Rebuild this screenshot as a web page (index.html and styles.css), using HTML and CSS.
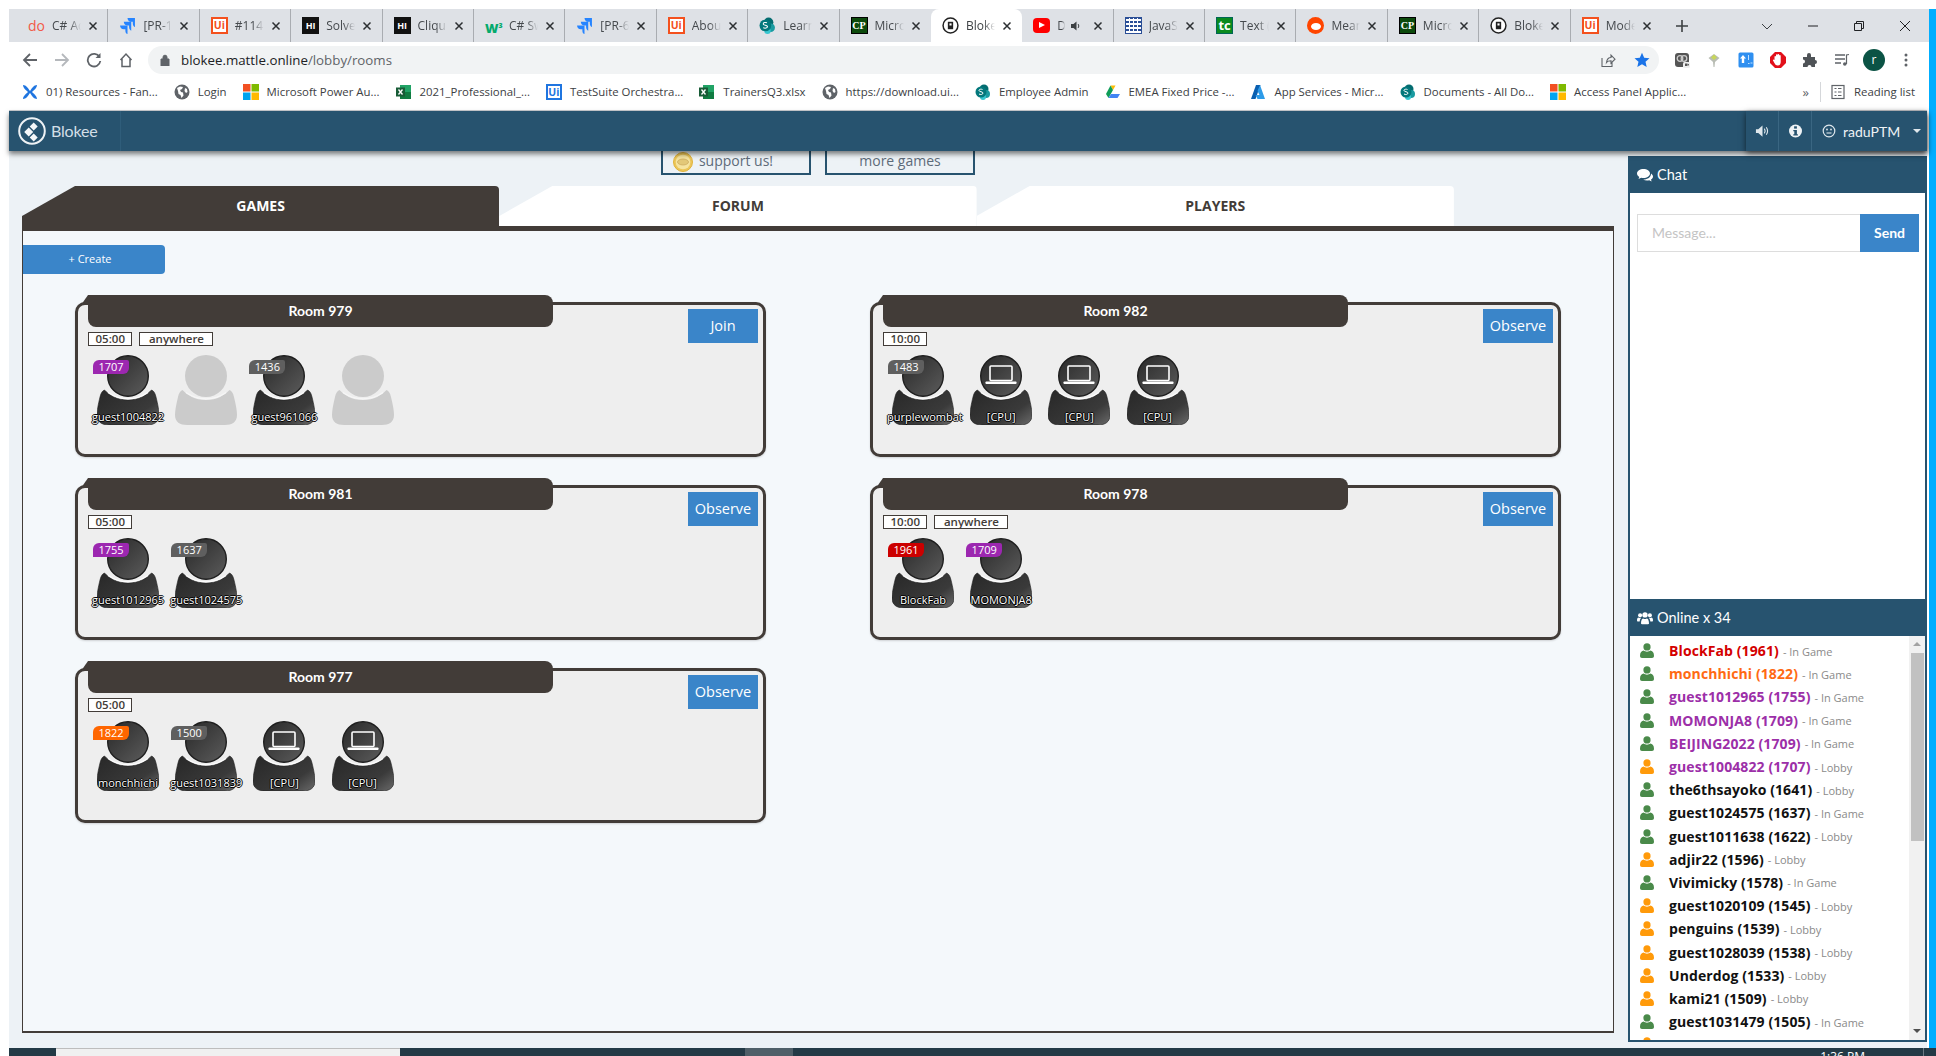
FILE: index.html
```html
<!DOCTYPE html>
<html lang="en">
<head>
<meta charset="utf-8">
<title>Blokee</title>
<link rel="stylesheet" href="styles.css">
</head>
<body>
<svg class="defs" width="0" height="0" aria-hidden="true">
  <defs>
    <linearGradient id="dark" x1="0" y1="0" x2="1" y2="1"><stop offset="0" stop-color="#282828"/><stop offset="1" stop-color="#5c5c5c"/></linearGradient>
    <linearGradient id="bodyg" x1="0" y1="0.2" x2="1" y2="1"><stop offset="0" stop-color="#2a2a2a"/><stop offset="0.65" stop-color="#3a3a3a"/><stop offset="1" stop-color="#6a6a6a"/></linearGradient>
    <symbol id="person" viewBox="0 0 62 70">
      <path fill="url(#bodyg)" stroke="#1d1d1d" stroke-width=".6" d="M7.500 35C12 40 20 45 31 45C42 45 50 40 54.500 35C57 36 58 38 59 42C61 50 62 56 62 60C62 67 57 70 50 70H12C5 70 0 67 0 60C0 56 1 50 3 42C4 38 5 36 7.500 35Z"/>
      <path fill="none" stroke="#fff" stroke-width="1.200" opacity=".85" d="M11 37.500C16 41 23 43.800 31 43.800C39 43.800 46 41 51 37.500"/>
      <circle cx="31" cy="21" r="20.300" fill="url(#dark)" stroke="#1e1e1e" stroke-width="1.400"/>
    </symbol>
    <symbol id="ghost" viewBox="0 0 62 70">
      <path fill="#cbcbcb" d="M7.500 35C12 40 20 45 31 45C42 45 50 40 54.500 35C57 36 58 38 59 42C61 50 62 56 62 60C62 67 57 70 50 70H12C5 70 0 67 0 60C0 56 1 50 3 42C4 38 5 36 7.500 35Z"/>
      <path fill="none" stroke="#f6f6f6" stroke-width="1.200" d="M11 37.500C16 41 23 43.800 31 43.800C39 43.800 46 41 51 37.500"/>
      <circle cx="31" cy="21" r="21" fill="#cbcbcb"/>
    </symbol>
    <symbol id="laptop" viewBox="0 0 62 70">
      <rect x="20" y="11" width="22" height="14.500" rx="1" fill="none" stroke="#fff" stroke-width="1.600"/>
      <rect x="15.500" y="26.500" width="31" height="2.600" rx=".8" fill="#fff"/>
    </symbol>
    <symbol id="user" viewBox="0 0 14 15">
      <circle cx="7" cy="3.900" r="3.600"/>
      <path d="M0 12.800C0 9.400 1.600 8 3.800 7.600C5 9 9 9 10.200 7.600C12.400 8 14 9.400 14 12.800C14 14.200 13.200 15 12 15H2C.8 15 0 14.200 0 12.800Z"/>
    </symbol>
    <symbol id="close" viewBox="0 0 10 10"><path d="M1.500 1.500L8.500 8.500M8.500 1.500L1.500 8.500" stroke="#2c2f32" stroke-width="1.500" fill="none"/></symbol>
    <symbol id="globe" viewBox="0 0 16 16"><circle cx="8" cy="8" r="7.500" fill="#5f6368"/><path fill="#fff" d="M3 4l3-1.500 3 .5-1 2-2 1 1 2 2 .5.500 3-2 2.500-1-3-2-1-.5-3zM11 4l2 1 .5 3-1.500 1-1.500-2z"/></symbol>
    <symbol id="coinglobe" viewBox="0 0 16 16"><circle cx="8" cy="8" r="7" fill="#fff" stroke="#222" stroke-width="1.400"/><path d="M5.500 4.500h5v7h-5z" fill="#222"/><path d="M7 6h2v2H7z" fill="#fff"/></symbol>
    <symbol id="jira" viewBox="0 0 16 16"><path fill="#2684ff" d="M15 1H8c0 2 1.500 3.500 3.500 3.500H13V6c0 2 1.200 3.200 2 3.500zM11.500 4.500h-7c0 2 1.500 3.500 3.500 3.500h1.500v1.500c0 2 1.200 3.200 2 3.500z"/><path fill="#2684ff" d="M8 8H1c0 2 1.500 3.500 3.500 3.500H6V13c0 2 1.200 3 2 3z"/></symbol>
    <symbol id="excel" viewBox="0 0 16 16"><path fill="#21a366" d="M4 1h11v14H4z"/><path fill="#107c41" d="M9 8h6v7H4v-4z"/><rect y="3.500" width="9" height="9" fill="#185c37"/><path d="M2.500 5.500l4 5M6.500 5.500l-4 5" stroke="#fff" stroke-width="1.300"/></symbol>
    <symbol id="ms" viewBox="0 0 16 16"><path fill="#f25022" d="M0 0h7.500v7.500H0z"/><path fill="#7fba00" d="M8.500 0H16v7.500H8.500z"/><path fill="#00a4ef" d="M0 8.500h7.500V16H0z"/><path fill="#ffb900" d="M8.500 8.500H16V16H8.500z"/></symbol>
    <symbol id="sp" viewBox="0 0 16 16"><circle cx="9" cy="5" r="4.500" fill="#036c70"/><circle cx="11" cy="10" r="4" fill="#1a9ba1"/><circle cx="8" cy="13" r="3" fill="#37c6d0"/><circle cx="6" cy="8" r="5.500" fill="#03787c"/><path d="M4 10c1.500 1 4 .5 4-1s-4-1-4-2.500 2.500-1.500 3.500-1" stroke="#fff" fill="none" stroke-width="1"/></symbol>
  </defs>
</svg>

<div class="window">
  <div class="tabstrip">
    <div class="tab"><span class="fav fav-do">do</span><span class="tab-title">C# Ad</span><svg class="x"><use href="#close"/></svg></div>
    <div class="tab"><svg class="fav"><use href="#jira"/></svg><span class="tab-title">[PR-1</span><svg class="x"><use href="#close"/></svg></div>
    <div class="tab"><span class="fav fav-ui">Ui</span><span class="tab-title">#114</span><svg class="x"><use href="#close"/></svg></div>
    <div class="tab"><span class="fav fav-hi">HI</span><span class="tab-title">Solve</span><svg class="x"><use href="#close"/></svg></div>
    <div class="tab"><span class="fav fav-hi">HI</span><span class="tab-title">Cliqu</span><svg class="x"><use href="#close"/></svg></div>
    <div class="tab"><span class="fav fav-w3">W<sup>3</sup></span><span class="tab-title">C# Sw</span><svg class="x"><use href="#close"/></svg></div>
    <div class="tab"><svg class="fav"><use href="#jira"/></svg><span class="tab-title">[PR-6</span><svg class="x"><use href="#close"/></svg></div>
    <div class="tab"><span class="fav fav-ui">Ui</span><span class="tab-title">Abou</span><svg class="x"><use href="#close"/></svg></div>
    <div class="tab"><svg class="fav"><use href="#sp"/></svg><span class="tab-title">Learn</span><svg class="x"><use href="#close"/></svg></div>
    <div class="tab tab-prev"><span class="fav fav-cp">CP</span><span class="tab-title">Micro</span><svg class="x"><use href="#close"/></svg></div>
    <div class="tab tab-active"><svg class="fav"><use href="#coinglobe"/></svg><span class="tab-title">Bloke</span><svg class="x"><use href="#close"/></svg></div>
    <div class="tab"><span class="fav fav-yt"></span><span class="tab-title tab-short">D</span><svg class="speaker" viewBox="0 0 12 12"><path d="M1 4h2.500L6.500 1.500v9L3.500 8H1z" fill="#3c4043"/><path d="M8 4c1 1 1 3 0 4" stroke="#3c4043" fill="none"/></svg><svg class="x"><use href="#close"/></svg></div>
    <div class="tab"><span class="fav fav-grid"></span><span class="tab-title">JavaS</span><svg class="x"><use href="#close"/></svg></div>
    <div class="tab"><span class="fav fav-tc">tc</span><span class="tab-title">Text (</span><svg class="x"><use href="#close"/></svg></div>
    <div class="tab"><span class="fav fav-red"></span><span class="tab-title">Mean</span><svg class="x"><use href="#close"/></svg></div>
    <div class="tab"><span class="fav fav-cp">CP</span><span class="tab-title">Micro</span><svg class="x"><use href="#close"/></svg></div>
    <div class="tab"><svg class="fav"><use href="#coinglobe"/></svg><span class="tab-title">Bloke</span><svg class="x"><use href="#close"/></svg></div>
    <div class="tab"><span class="fav fav-ui">Ui</span><span class="tab-title">Mode</span><svg class="x"><use href="#close"/></svg></div>
    <svg class="newtab" viewBox="0 0 14 14"><path d="M7 1v12M1 7h12" stroke="#3c4043" stroke-width="1.600"/></svg>
    <div class="winctl">
      <svg viewBox="0 0 12 12"><path d="M1 4l5 5 5-5" stroke="#3c4043" fill="none"/></svg>
      <svg viewBox="0 0 12 12"><path d="M1 6h10" stroke="#202124"/></svg>
      <svg viewBox="0 0 12 12"><path d="M3.500 3.500V1.500h7v7h-2M1.500 3.500h7v7h-7z" stroke="#202124" fill="none"/></svg>
      <svg viewBox="0 0 12 12"><path d="M1 1l10 10M11 1L1 11" stroke="#202124" fill="none"/></svg>
    </div>
  </div>

  <div class="toolbar">
    <svg class="nav" viewBox="0 0 16 16"><path d="M15 8H2M8 2L2 8l6 6" fill="none" stroke="#5f6368" stroke-width="1.800"/></svg>
    <svg class="nav" viewBox="0 0 16 16"><path d="M1 8h13M8 2l6 6-6 6" fill="none" stroke="#b5b8bc" stroke-width="1.800"/></svg>
    <svg class="nav" viewBox="0 0 16 16"><path d="M13.500 5A6.300 6.300 0 1 0 14.300 9" fill="none" stroke="#5f6368" stroke-width="1.800"/><path d="M14.500 1v5h-5z" fill="#5f6368"/></svg>
    <svg class="nav" viewBox="0 0 16 16"><path d="M2.500 8L8 2l5.500 6M4 7v7.500h8V7" fill="none" stroke="#5f6368" stroke-width="1.500"/></svg>
    <div class="urlbar">
      <svg class="lock" viewBox="0 0 10 12"><path d="M1 5h8v7H1zM3 5V3.200a2 2 0 0 1 4 0V5" fill="#5f6368" stroke="#5f6368"/></svg>
      <span class="url">blokee.mattle.online<span class="url-path">/lobby/rooms</span></span>
      <svg class="share" viewBox="0 0 16 16"><path d="M2 6v8.500h10V10M6.500 10.500C7 7 9 5.500 11 5.500V3l4 4.200-4 4V8.800c-2 0-3.500.4-4.500 1.700z" fill="none" stroke="#5f6368" stroke-width="1.100"/></svg>
      <svg class="star" viewBox="0 0 16 16"><path d="M8 .8l2.200 5 5.300.5-4 3.500 1.200 5.300L8 12.300l-4.700 2.800 1.200-5.300-4-3.500 5.300-.5z" fill="#1a73e8"/></svg>
    </div>
    <div class="exts">
      <svg viewBox="0 0 16 16"><rect x="1" y="1" width="14" height="14" rx="3" fill="#555"/><circle cx="6" cy="6.500" r="2.800" fill="none" stroke="#ccc" stroke-width="1.300"/><circle cx="10" cy="6.500" r="2.800" fill="none" stroke="#ccc" stroke-width="1.300"/><rect x="9" y="10" width="7" height="6" rx="1.500" fill="#eee"/><path d="M11 11.500h2.500v2.500H11zM13.500 12.700l1.500-1v2z" fill="#555"/></svg>
      <svg viewBox="0 0 16 16"><path d="M2.500 6L8 2l5.500 4L9 10l-.5 5h-1L7 10z" fill="#b9bdb4"/><path d="M5 5.500L8 2.500l3 3L8 8z" fill="#c7d65a"/></svg>
      <svg viewBox="0 0 16 16"><rect x="0.500" y="0.500" width="15" height="15" rx="1.500" fill="#2f8ff0"/><path d="M5 3l3 3.500H6.200V11H3.800V6.500H2z" fill="#fff"/><path d="M10.500 3v5M12.500 11h2M10 11.500h1.500" stroke="#bfe0ff"/></svg>
      <svg viewBox="0 0 16 16"><path d="M5 0h6l5 5v6l-5 5H5l-5-5V5z" fill="#e2101a"/><path d="M4.500 8V4.500a.8.8 0 0 1 1.500 0V3a.8.8 0 0 1 1.600 0v-.2a.8.8 0 0 1 1.600 0V3.500a.8.8 0 0 1 1.500 0V10c0 2-1 3.500-3 3.500-1.500 0-2.500-.7-3-2L3 8.500c-.4-1 .9-1.600 1.500-.5z" fill="#fff"/></svg>
      <svg viewBox="0 0 16 16"><path d="M1 5h4V3a2 2 0 0 1 4 0v2h4v3a2 2 0 0 1 0 4v3H9.500a2 2 0 0 0-4 0H1v-3.500a2 2 0 0 0 0-4z" fill="#4f5357"/></svg>
      <svg viewBox="0 0 16 16"><path d="M1 3h10M1 7h10M1 11h6" stroke="#5f6368" stroke-width="1.500"/><path d="M12.500 12V3l2.500-.5" stroke="#5f6368" fill="none" stroke-width="1.200"/><circle cx="10.800" cy="12" r="1.800" fill="#5f6368"/></svg>
      <span class="profile">r</span>
      <svg viewBox="0 0 16 16"><circle cx="8" cy="3" r="1.500" fill="#5f6368"/><circle cx="8" cy="8" r="1.500" fill="#5f6368"/><circle cx="8" cy="13" r="1.500" fill="#5f6368"/></svg>
    </div>
  </div>

  <div class="bookmarks">
    <a class="bm"><svg viewBox="0 0 16 16"><path d="M1 1c3 0 5 3 7 6 2-3 4-6 7-6 0 3-3 5-5 7 2 2 5 4 5 7-3 0-5-3-7-6-2 3-4 6-7 6 0-3 3-5 5-7-2-2-5-4-5-7z" fill="#1f75e0"/></svg>01) Resources - Fan...</a>
    <a class="bm"><svg><use href="#globe"/></svg>Login</a>
    <a class="bm"><svg><use href="#ms"/></svg>Microsoft Power Au...</a>
    <a class="bm"><svg><use href="#excel"/></svg>2021_Professional_...</a>
    <a class="bm"><span class="fav fav-uib">Ui</span>TestSuite Orchestra...</a>
    <a class="bm"><svg><use href="#excel"/></svg>TrainersQ3.xlsx</a>
    <a class="bm"><svg><use href="#globe"/></svg>https://download.ui...</a>
    <a class="bm"><svg><use href="#sp"/></svg>Employee Admin</a>
    <a class="bm"><svg viewBox="0 0 16 16"><path d="M5.500 1.500h5L8 6z" fill="#fbbc04"/><path d="M5.500 1.500L1 10l2.500 4L8 6z" fill="#0f9d58"/><path d="M10.500 1.500L15 10l-2.500 4H3.500L6 10h9z" fill="#4285f4"/></svg>EMEA Fixed Price -...</a>
    <a class="bm"><svg viewBox="0 0 16 16"><path d="M6 1h4.500l-5 14H1z" fill="#0a5fb0"/><path d="M10 1l5 14H7.500L5.500 11h4L7.500 7z" fill="#2d9be8"/></svg>App Services - Micr...</a>
    <a class="bm"><svg><use href="#sp"/></svg>Documents - All Do...</a>
    <a class="bm"><svg><use href="#ms"/></svg>Access Panel Applic...</a>
    <span class="bm-more">»</span>
    <a class="bm bm-read"><svg viewBox="0 0 16 16"><rect x="2" y="1.500" width="12" height="13" fill="none" stroke="#5f6368" stroke-width="1.200"/><path d="M4.500 4.500h2M8 4.500h3.500M4.500 8h2M8 8h3.500M4.500 11.500h2M8 11.500h3.500" stroke="#5f6368"/></svg>Reading list</a>
  </div>

  <header class="appbar">
    <div class="logo">
      <svg viewBox="0 0 28 28"><circle cx="14" cy="14" r="12.800" fill="none" stroke="#eef2f5" stroke-width="2"/><path d="M15.700 5.500l4 4-4 4-4-4zM10.700 10.500l4.500 4.500-4.500 4.500L6.200 15zM15.700 16.500l4 4-4 4-4-4z" fill="#f4f7f9"/></svg>
      <span>Blokee</span>
    </div>
    <div class="appbar-right">
      <span class="ab-cell"><svg viewBox="0 0 16 14"><path d="M1 5h2.500L8 1v12L3.500 9H1z" fill="#dfe7ec"/><path d="M10 4.500c1 1.500 1 3.500 0 5M12 3c1.800 2.500 1.800 5.500 0 8" stroke="#dfe7ec" fill="none" stroke-width="1.200"/></svg></span>
      <span class="ab-cell"><svg viewBox="0 0 14 14"><circle cx="7" cy="7" r="6.500" fill="#eef2f5"/><rect x="5.600" y="2.300" width="2.800" height="2.300" fill="#27536f"/><path d="M4.800 6h3.600v4.200h1v1.300H4.800v-1.300h1V7.300h-1z" fill="#27536f"/></svg></span>
      <span class="ab-user">
        <svg viewBox="0 0 14 14"><circle cx="7" cy="7" r="5.800" fill="none" stroke="#dfe7ec" stroke-width="1.200"/><circle cx="5" cy="5.500" r=".9" fill="#dfe7ec"/><circle cx="9" cy="5.500" r=".9" fill="#dfe7ec"/><path d="M4.500 9h5" stroke="#dfe7ec" stroke-width="1.100"/></svg>
        <span>raduPTM</span>
        <i class="caret"></i>
      </span>
    </div>
  </header>

  <div class="app">
    <main class="content">
      <div class="promo">
        <a class="promo-btn promo-coin"><svg viewBox="0 0 20 20"><circle cx="10" cy="10" r="9.500" fill="#ecc65a" stroke="#e0b33a"/><circle cx="10" cy="10" r="7.300" fill="#f6e4a0"/><ellipse cx="10" cy="10" rx="5.500" ry="3" fill="#e3c878" stroke="#c9a65a" stroke-width=".7"/></svg>support us!</a>
        <a class="promo-btn">more games</a>
      </div>
      <nav class="tabs">
        <a class="ptab ptab-on">GAMES</a>
        <a class="ptab">FORUM</a>
        <a class="ptab">PLAYERS</a>
      </nav>
      <section class="panel">
        <a class="create">+ Create</a>
        <div class="rooms">

          <article class="room">
            <div class="room-head"><h3 class="room-title">Room 979</h3><a class="room-btn">Join</a></div>
            <div class="tags"><span class="tag">05:00</span><span class="tag tag-w">anywhere</span></div>
            <div class="seats">
              <div class="seat"><svg class="av"><use href="#person"/></svg><b class="badge b-purple">1707</b><span class="name">guest1004822</span></div>
              <div class="seat"><svg class="av"><use href="#ghost"/></svg></div>
              <div class="seat"><svg class="av"><use href="#person"/></svg><b class="badge b-gray">1436</b><span class="name">guest961066</span></div>
              <div class="seat"><svg class="av"><use href="#ghost"/></svg></div>
            </div>
          </article>

          <article class="room">
            <div class="room-head"><h3 class="room-title">Room 982</h3><a class="room-btn">Observe</a></div>
            <div class="tags"><span class="tag">10:00</span></div>
            <div class="seats">
              <div class="seat"><svg class="av"><use href="#person"/></svg><b class="badge b-gray">1483</b><span class="name">purplewombat</span></div>
              <div class="seat"><svg class="av"><use href="#person"/><use href="#laptop"/></svg><span class="name">[CPU]</span></div>
              <div class="seat"><svg class="av"><use href="#person"/><use href="#laptop"/></svg><span class="name">[CPU]</span></div>
              <div class="seat"><svg class="av"><use href="#person"/><use href="#laptop"/></svg><span class="name">[CPU]</span></div>
            </div>
          </article>

          <article class="room">
            <div class="room-head"><h3 class="room-title">Room 981</h3><a class="room-btn">Observe</a></div>
            <div class="tags"><span class="tag">05:00</span></div>
            <div class="seats">
              <div class="seat"><svg class="av"><use href="#person"/></svg><b class="badge b-purple">1755</b><span class="name">guest1012965</span></div>
              <div class="seat"><svg class="av"><use href="#person"/></svg><b class="badge b-gray">1637</b><span class="name">guest1024575</span></div>
            </div>
          </article>

          <article class="room">
            <div class="room-head"><h3 class="room-title">Room 978</h3><a class="room-btn">Observe</a></div>
            <div class="tags"><span class="tag">10:00</span><span class="tag tag-w">anywhere</span></div>
            <div class="seats">
              <div class="seat"><svg class="av"><use href="#person"/></svg><b class="badge b-red">1961</b><span class="name">BlockFab</span></div>
              <div class="seat"><svg class="av"><use href="#person"/></svg><b class="badge b-purple">1709</b><span class="name">MOMONJA8</span></div>
            </div>
          </article>

          <article class="room">
            <div class="room-head"><h3 class="room-title">Room 977</h3><a class="room-btn">Observe</a></div>
            <div class="tags"><span class="tag">05:00</span></div>
            <div class="seats">
              <div class="seat"><svg class="av"><use href="#person"/></svg><b class="badge b-orange">1822</b><span class="name">monchhichi</span></div>
              <div class="seat"><svg class="av"><use href="#person"/></svg><b class="badge b-gray">1500</b><span class="name">guest1031839</span></div>
              <div class="seat"><svg class="av"><use href="#person"/><use href="#laptop"/></svg><span class="name">[CPU]</span></div>
              <div class="seat"><svg class="av"><use href="#person"/><use href="#laptop"/></svg><span class="name">[CPU]</span></div>
            </div>
          </article>

        </div>
      </section>
    </main>

    <aside class="side">
      <div class="side-head"><svg viewBox="0 0 16 14"><path d="M6.500 1C3 1 0 3 0 5.500c0 1.500 1 2.700 2.300 3.500L1.500 11l2.700-1.300c.7.200 1.500.3 2.300.3 3.500 0 6.500-2 6.500-4.500S10 1 6.500 1z" fill="#fff"/><path d="M14 5.500c1.300.8 2 1.900 2 3.100 0 1.200-.8 2.300-2 3l.6 1.900-2.400-1.300c-.8.200-1.400.3-2.200.3-1.500 0-2.800-.4-3.800-1 4 .2 8-2 7.800-6z" fill="#fff"/></svg>Chat</div>
      <div class="chat">
        <div class="chat-form"><span class="chat-input">Message...</span><a class="chat-send">Send</a></div>
      </div>
      <div class="side-head"><svg viewBox="0 0 18 14"><circle cx="9" cy="3.500" r="3" fill="#fff"/><path d="M4.500 13c0-4 1.500-5.500 2.500-5.500 1 1 3 1 4 0 1 0 2.500 1.500 2.500 5.500 0 .7-.5 1-1 1h-7c-.5 0-1-.3-1-1z" fill="#fff"/><circle cx="3.500" cy="4" r="2.300" fill="#fff"/><circle cx="14.500" cy="4" r="2.300" fill="#fff"/><path d="M0 9.500c0-2 .8-3 1.700-3 .8.700 2 .8 2.800.4-.9 1-1.400 2.300-1.500 4H1c-.6 0-1-.5-1-1.400zM18 9.500c0-2-.8-3-1.700-3-.8.700-2 .8-2.800.4.900 1 1.400 2.300 1.500 4H17c.6 0 1-.5 1-1.400z" fill="#fff"/></svg>Online x 34</div>
      <div class="online">
        <ul class="players">
          <li class="pl"><svg class="pi pi-g"><use href="#user"/></svg><b class="c-red">BlockFab (1961)</b><span>- In Game</span></li>
          <li class="pl"><svg class="pi pi-g"><use href="#user"/></svg><b class="c-orange">monchhichi (1822)</b><span>- In Game</span></li>
          <li class="pl"><svg class="pi pi-g"><use href="#user"/></svg><b class="c-purple">guest1012965 (1755)</b><span>- In Game</span></li>
          <li class="pl"><svg class="pi pi-g"><use href="#user"/></svg><b class="c-purple">MOMONJA8 (1709)</b><span>- In Game</span></li>
          <li class="pl"><svg class="pi pi-g"><use href="#user"/></svg><b class="c-purple">BEIJING2022 (1709)</b><span>- In Game</span></li>
          <li class="pl"><svg class="pi pi-o"><use href="#user"/></svg><b class="c-purple">guest1004822 (1707)</b><span>- Lobby</span></li>
          <li class="pl"><svg class="pi pi-g"><use href="#user"/></svg><b>the6thsayoko (1641)</b><span>- Lobby</span></li>
          <li class="pl"><svg class="pi pi-g"><use href="#user"/></svg><b>guest1024575 (1637)</b><span>- In Game</span></li>
          <li class="pl"><svg class="pi pi-g"><use href="#user"/></svg><b>guest1011638 (1622)</b><span>- Lobby</span></li>
          <li class="pl"><svg class="pi pi-o"><use href="#user"/></svg><b>adjir22 (1596)</b><span>- Lobby</span></li>
          <li class="pl"><svg class="pi pi-g"><use href="#user"/></svg><b>Vivimicky (1578)</b><span>- In Game</span></li>
          <li class="pl"><svg class="pi pi-o"><use href="#user"/></svg><b>guest1020109 (1545)</b><span>- Lobby</span></li>
          <li class="pl"><svg class="pi pi-o"><use href="#user"/></svg><b>penguins (1539)</b><span>- Lobby</span></li>
          <li class="pl"><svg class="pi pi-o"><use href="#user"/></svg><b>guest1028039 (1538)</b><span>- Lobby</span></li>
          <li class="pl"><svg class="pi pi-o"><use href="#user"/></svg><b>Underdog (1533)</b><span>- Lobby</span></li>
          <li class="pl"><svg class="pi pi-o"><use href="#user"/></svg><b>kami21 (1509)</b><span>- Lobby</span></li>
          <li class="pl"><svg class="pi pi-g"><use href="#user"/></svg><b>guest1031479 (1505)</b><span>- In Game</span></li>
          <li class="pl"><svg class="pi pi-o"><use href="#user"/></svg></li>
        </ul>
        <div class="sbar">
          <i class="arr arr-up"></i>
          <i class="thumb"></i>
          <i class="arr arr-down"></i>
        </div>
      </div>
    </aside>
  </div>
</div>

<footer class="taskbar">
  <span class="tb-start"></span>
  <span class="tb-search"></span>
  <span class="tb-gap"></span>
  <span class="tb-active"></span>
  <span class="tb-fill"></span>
  <span class="tb-clock">1:36 PM</span>
  <span class="tb-sep"></span>
</footer>
</body>
</html>
```
FILE: styles.css
```css
* { box-sizing: border-box; }
html, body { margin: 0; height: 1056px; overflow: hidden; }
body { display: flex; flex-direction: column; padding-top: 9px; background: #fff; font-family: "Open Sans", "Liberation Sans", sans-serif; color: #202124; }
.defs { position: absolute; }
a { color: inherit; text-decoration: none; }
h3 { margin: 0; }
ul { margin: 0; padding: 0; list-style: none; }

.window { height: 1039px; margin-left: 9px; padding-right: 2px; border-right: 7px solid #00aeff; display: flex; flex-direction: column; }

/* browser tabs */
.tabstrip { height: 33px; flex: none; background: #dee1e6; display: flex; align-items: center; padding-left: 8px; margin-right: -2px; }
.tab { width: 91.4px; height: 33px; flex: none; display: flex; align-items: center; padding-left: 11px; position: relative; border-right: 1px solid #a9acb1; }
.tab-prev, .tab:nth-child(18) { border-right-color: transparent; }
.tab:nth-child(10) { border-right: 0; }
.tab-active { background: #fff; border-radius: 8px 8px 0 0; border-right: 0; }
.fav { width: 17px; height: 17px; flex: none; display: block; text-align: center; font-size: 10px; line-height: 17px; font-weight: 700; }
.fav-do { color: #f25a47; font-size: 14px; font-weight: 400; }
.fav-ui { background: #fff; color: #f4511e; border: 2px solid #f4511e; line-height: 13px; font-weight: 700; font-size: 10.5px; }
.fav-uib { background: #fff; color: #1f75e0; border: 2px solid #1f75e0; line-height: 12px; font-weight: 700; font-size: 10.5px; margin-right: 8px; width: 16px; height: 16px; }
.fav-hi { background: #111; color: #fff; font-size: 9px; }
.fav-w3 { color: #04aa6d; font-size: 13px; font-weight: 800; }
.fav-w3 sup { font-size: 7px; }
.fav-cp { background: #0c4a0c; color: #fff; border: 1px solid #000; font-size: 10px; font-family: "Liberation Serif", serif; line-height: 15px; }
.fav-yt { background: #f00; border-radius: 4px; position: relative; height: 15px; }
.fav-yt::after { content: ""; position: absolute; left: 6px; top: 4px; border-left: 6px solid #fff; border-top: 3.5px solid transparent; border-bottom: 3.5px solid transparent; }
.fav-grid { background: repeating-linear-gradient(0deg, #fff 0 2px, transparent 2px 4px), repeating-linear-gradient(90deg, #2a4e96 0 3px, #fff 3px 4px); border: 1.5px solid #2a4e96; }
.fav-tc { background: #0a8a1e; color: #fff; font-size: 13px; border: 1px solid #065; line-height: 15px; }
.fav-red { background: #ff4500; border-radius: 50%; position: relative; }
.fav-red::after { content: ""; position: absolute; left: 3.5px; top: 6px; width: 10px; height: 7px; border-radius: 50%; background: #fff; }
.tab-title { margin-left: 7px; width: 29px; flex: none; overflow: hidden; white-space: nowrap; font-size: 12px; color: #45494d; -webkit-mask-image: linear-gradient(90deg, #000 60%, transparent); mask-image: linear-gradient(90deg, #000 60%, transparent); }
.tab-short { width: 8px; }
.speaker { width: 12px; height: 12px; margin-left: 5px; margin-right: 4px; flex: none; }
.x { width: 10px; height: 10px; flex: none; margin-left: 7px; }
.tab-active .tab-title { color: #3c4043; }
.newtab { width: 14px; height: 14px; flex: none; margin-left: 13px; }
.winctl { margin-left: auto; display: flex; align-items: center; gap: 34px; padding-right: 18px; }
.winctl svg { width: 12px; height: 12px; display: block; }

/* toolbar */
.toolbar { height: 35px; flex: none; display: flex; align-items: center; padding-left: 13px; background: #fff; }
.nav { width: 16px; height: 16px; margin-right: 16px; flex: none; }
.urlbar { height: 28px; width: 1511px; margin-left: -2px; flex: none; background: #f1f3f4; border-radius: 14px; display: flex; align-items: center; padding-left: 12px; }
.lock { width: 10px; height: 12px; flex: none; }
.url { margin-left: 11px; font-size: 13.3px; color: #202124; }
.url-path { color: #5f6368; }
.share { width: 16px; height: 16px; margin-left: auto; }
.star { width: 16px; height: 16px; margin-left: 18px; margin-right: 9px; }
.exts { display: flex; align-items: center; gap: 16px; margin-left: 15px; }
.exts svg { width: 16px; height: 16px; display: block; }
.profile { width: 22px; height: 22px; margin: 0 -3px; border-radius: 50%; background: #0b5345; color: #fff; font-size: 12px; text-align: center; line-height: 22px; flex: none; }

/* bookmarks */
.bookmarks { height: 34px; flex: none; display: flex; align-items: center; padding: 0 0 4px 13px; border-bottom: 1px solid #c9cbcf; gap: 16px; background: #fff; font-size: 11.4px; color: #3c4043; white-space: nowrap; }
.bm { display: flex; align-items: center; }
.bm svg { width: 16px; height: 16px; margin-right: 8px; flex: none; }
.bm-more { margin-left: auto; margin-right: -7px; color: #5f6368; font-size: 13px; padding-right: 11px; border-right: 1px solid #d5d7da; line-height: 20px; }
.bm-read { padding-right: 12px; }

/* app bar */
.appbar { height: 40px; flex: none; background: #27536f; display: flex; justify-content: space-between; box-shadow: 0 3px 5px rgba(0,0,0,.5); position: relative; z-index: 2; }
.logo { width: 112px; display: flex; align-items: center; padding: 0 0 2px 9px; border-right: 1px solid #2f5d7a; color: #d3dfe7; font-family: Lato, sans-serif; font-size: 16px; font-weight: 400; letter-spacing: -.2px; }
.logo svg { width: 28px; height: 28px; margin-right: 5px; margin-top: 2px; }
.appbar-right { display: flex; align-items: stretch; box-shadow: 0 2px 6px rgba(0,0,0,.6); color: #eef2f5; font-family: Lato, sans-serif; font-size: 14px; }
.ab-cell { width: 33px; display: flex; align-items: center; justify-content: center; border-right: 1px solid #3a6682; }
.ab-cell svg { width: 15px; height: 14px; }
.ab-user { width: 115px; display: flex; align-items: center; padding-left: 10px; gap: 7px; }
.ab-user svg { width: 14px; height: 14px; }
.caret { margin-left: 6px; border-top: 4px solid #dfe7ec; border-left: 4px solid transparent; border-right: 4px solid transparent; }

/* main */
.app { flex: 1; min-height: 0; display: flex; background: #edf2f6; }
.content { flex: 1; min-width: 0; padding: 0 14px 15px 13px; display: flex; flex-direction: column; }
.promo { display: flex; justify-content: center; gap: 14px; height: 24px; flex: none; }
.promo-btn { width: 150px; height: 24px; padding-bottom: 3px; border: 2px solid #27536f; border-top: 0; display: flex; align-items: center; justify-content: center; font-size: 14px; color: #5d6b7a; }
.promo-coin { padding-right: 26px; }
.promo-btn svg { width: 20px; height: 20px; margin-right: 6px; margin-top: 2px; flex: none; }
.tabs { margin-top: 11px; display: flex; height: 40px; flex: none; }
.ptab { width: 477.3px; padding-bottom: 2px; display: flex; align-items: center; justify-content: center; background: #fff; color: #423c38; font-weight: 700; font-size: 14px; border-top-right-radius: 4px; clip-path: polygon(0 30px, 53px 0, 100% 0, 100% 100%, 0 100%); }
.ptab-on { background: #423c38; color: #fff; }
.panel { flex: 1; min-height: 0; background: #f4f8fb; border: 1px solid #423c38; border-top: 5px solid #423c38; border-bottom-width: 2px; }
.create { margin: 14px 0 0 0; width: 142px; height: 29px; padding: 0 8px 2px 0; display: flex; align-items: center; justify-content: center; background: #3a85c9; color: #fff; font-size: 11px; border-radius: 0 4px 4px 0; }
.rooms { margin: 28px 0 0 52px; display: grid; grid-template-columns: 691px 691px; column-gap: 104px; row-gap: 28px; }
.room { height: 155px; background: #eee; border: 3px solid #423c38; border-radius: 10px; padding-left: 10px; box-shadow: 0 1px 2px rgba(0,0,0,.15); }
.room-head { display: flex; justify-content: space-between; align-items: flex-start; margin-top: -10px; padding-right: 5px; }
.room-title { width: 465px; height: 32px; position: relative; background: #423c38; color: #fff; text-align: center; font: 700 14px/32px Lato, sans-serif; border-radius: 0 8px 8px 8px; }
.room-title::before { content: ""; position: absolute; left: -7px; top: 0; border-bottom: 10px solid #423c38; border-left: 7px solid transparent; }
.room-btn { width: 70px; height: 34px; padding-bottom: 2px; margin-top: 14px; margin-bottom: -16px; background: #3a85c9; color: #fff; display: flex; align-items: center; justify-content: center; font-size: 14.5px; }
.tags { display: flex; gap: 7px; margin-top: 5px; }
.tag { height: 14px; padding: 0 6.5px; background: #fff; border: 1px solid #423c38; color: #423c38; font-weight: 600; font-size: 11.5px; line-height: 11px; }
.tag-w { padding: 0 8.5px; }
.seats { display: flex; margin-top: 9px; margin-left: 1px; }
.seat { width: 78.2px; height: 70px; position: relative; flex: none; display: flex; justify-content: center; }
.av { width: 62px; height: 70px; display: block; }
.badge { position: absolute; left: 4px; top: 5px; width: 36px; height: 14px; color: #fff; font-weight: 400; font-size: 11px; line-height: 14px; text-align: center; border-radius: 6px 2px 6px 0; }
.b-purple { background: #9c27b0; }
.b-gray { background: #5f5f5f; }
.b-red { background: #cc0000; }
.b-orange { background: #ff6600; }
.name { position: absolute; left: 3px; width: 72px; top: 54px; text-align: center; color: #fff; font-size: 11px; line-height: 16px; white-space: nowrap; text-shadow: 1px 0 0 #000, -1px 0 0 #000, 0 1px 0 #000, 0 -1px 0 #000; }

/* sidebar */
.side { width: 299px; flex: none; margin: 5px 0 6px; display: flex; flex-direction: column; background: #fff; border: 2px solid #27536f; border-top: 0; font-family: Lato, sans-serif; }
.side-head { height: 37px; flex: none; margin: 0 -2px; padding-left: 9px; background: #27536f; color: #fff; display: flex; align-items: center; gap: 4px; font-size: 14.5px; }
.side-head svg { width: 16px; height: 14px; }
.chat { height: 406px; flex: none; padding: 21px 6px 0 7px; }
.chat-form { display: flex; height: 38px; }
.chat-input { flex: 1; border: 1px solid #ddd; border-right: 0; padding-left: 14px; line-height: 36px; color: #c4c4c4; font-size: 14px; }
.chat-send { width: 59px; padding-bottom: 1px; background: #3a85c9; color: #fff; font-weight: 700; font-size: 14px; display: flex; align-items: center; justify-content: center; }
.online { flex: 1; min-height: 0; display: flex; font-family: "Open Sans", sans-serif; overflow: hidden; }
.players { flex: 1; padding: 3px 0 0 10px; overflow: hidden; }
.pl { height: 23.2px; display: flex; align-items: center; white-space: nowrap; flex: none; }
.pi { width: 14px; height: 15px; margin-right: 15px; flex: none; }
.pi-g { fill: #4a8a4a; }
.pi-o { fill: #ff9a0a; }
.pl b { font-size: 14px; color: #111; letter-spacing: .1px; }
.pl span { font-size: 11px; color: #8a8a8a; margin-left: 4px; margin-top: 1px; }
.c-red { color: #d40000 !important; }
.c-orange { color: #ff6a13 !important; }
.c-purple { color: #9c2fa8 !important; }
.sbar { width: 16px; flex: none; background: #f1f1f1; display: flex; flex-direction: column; align-items: center; position: relative; }
.arr { display: block; height: 17px; width: 16px; position: relative; flex: none; }
.arr-up::after, .arr-down::after { content: ""; position: absolute; left: 4px; top: 6px; border-left: 4px solid transparent; border-right: 4px solid transparent; }
.arr-up::after { border-bottom: 4px solid #a3a3a3; }
.arr-down::after { border-top: 4px solid #505050; }
.arr-down { margin-top: auto; }
.thumb { display: block; width: 13px; height: 188px; background: #c1c1c1; flex: none; }

/* taskbar */
.taskbar { height: 8px; flex: none; margin-left: 9px; background: #233a46; display: flex; overflow: hidden; }
.tb-start { width: 47px; flex: none; }
.tb-search { width: 344px; flex: none; background: #f0f0f0; border-top: 1px solid #bdbdbd; }
.tb-gap { width: 345px; flex: none; }
.tb-active { width: 48px; flex: none; background: #4f5f68; }
.tb-fill { flex: 1; }
.tb-clock { color: #fff; font: 400 12px/12px "Open Sans", sans-serif; margin-top: 3px; padding-right: 58px; }
.tb-sep { width: 1px; background: #6b7a83; margin-right: 12px; flex: none; }
```
